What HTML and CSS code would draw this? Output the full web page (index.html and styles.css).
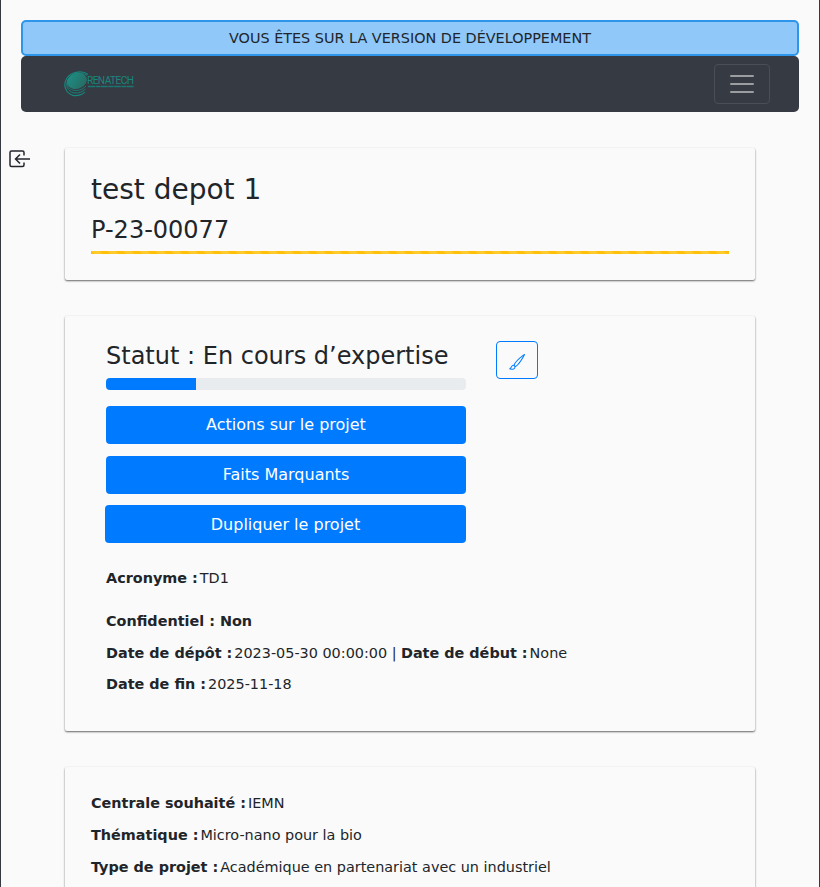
FILE: index.html
```html
<!DOCTYPE html>
<html lang="fr">
<head>
<meta charset="utf-8">
<title>test depot 1</title>
<link rel="stylesheet" href="styles.css">
</head>
<body>
<div class="page">
  <div class="banner">VOUS ÊTES SUR LA VERSION DE DÉVELOPPEMENT</div>
  <nav class="navbar">
    <a class="brand" href="#" aria-label="Renatech">
      <svg width="76" height="28" viewBox="0 0 76 28">
        <defs><linearGradient id="disc" x1="0" y1="0" x2="1" y2="1"><stop offset="0" stop-color="#1c9287"/><stop offset="1" stop-color="#29665f"/></linearGradient></defs>
        <g fill="none" stroke="#16877e">
          <path d="M25 4.500C20 .5 9 1 4 8C-.5 14.500 2.500 23.500 10 25.300C15 26.200 20 24.500 22 22" stroke-width="1.200"/>
          <path d="M24 5.500C19 2 10 2.500 5.500 8.500C1.500 15 4.500 21.500 11 22.900C16 23.600 20 21.500 22.500 19" stroke-width=".9"/>
          <path d="M5.500 9C2 16 7 20.500 13 20.500C18 20.500 21 18 23 16" stroke-width=".8"/>
        </g>
        <ellipse cx="14" cy="10.800" rx="10" ry="7.900" transform="rotate(-20 14 10.800)" fill="url(#disc)"/>
        <text class="logo-name" x="24" y="14">RENATECH</text>
        <path d="M25 16.500H71" stroke="#16877e" stroke-width="1.500" stroke-dasharray="7 .5 5 .4" opacity=".8"/>
      </svg>
    </a>
    <button class="toggler" aria-label="Menu">
      <svg width="30" height="30" viewBox="0 0 30 30"><path d="M4 7H26M4 15H26M4 23H26" stroke="#fff" stroke-opacity=".5" stroke-width="2" stroke-linecap="round"/></svg>
    </button>
  </nav>
  <a class="exit" href="#" aria-label="Retour">
    <svg width="22" height="18" viewBox="0 0 22 18" fill="none" stroke="#24262d" stroke-width="1.500"><path d="M15 5.500V2.500Q15 1 13.500 1H2.500Q1 1 1 2.500V15Q1 16.500 2.500 16.500H13.500Q15 16.500 15 15V12.500M21 9H6.500M11 4.500L6.500 9L11 13.500"/></svg>
  </a>
  <main class="content">
    <section class="card title-card">
      <h2>test depot 1</h2>
      <h4>P-23-00077</h4>
      <div class="stripe"></div>
    </section>
    <section class="card status-card">
      <div class="status-row">
        <div class="status-main">
          <h4>Statut : En cours d’expertise</h4>
          <div class="progress"><div class="progress-bar"></div></div>
          <button class="btn">Actions sur le projet</button>
          <button class="btn">Faits Marquants</button>
          <button class="btn wide">Dupliquer le projet</button>
        </div>
        <button class="edit" aria-label="Modifier">
          <svg width="16" height="16" viewBox="0 0 16 16" fill="#007bff"><path d="M15.825.120a.5.500 0 0 1 .132.584c-1.530 3.430-4.743 8.170-7.095 10.640a6.067 6.067 0 0 1-2.373 1.534c-.018.227-.060.538-.160.868-.201.659-.667 1.479-1.708 1.740a8.118 8.118 0 0 1-3.078.132 3.659 3.659 0 0 1-.562-.135 1.382 1.382 0 0 1-.466-.247.714.714 0 0 1-.204-.288.622.622 0 0 1 .004-.443c.095-.245.316-.380.461-.452.394-.197.625-.453.867-.826.095-.144.184-.297.287-.472l.117-.198c.151-.255.326-.540.546-.848.528-.739 1.201-.925 1.746-.896.126.007.243.025.348.048.062-.172.142-.380.238-.608.261-.619.658-1.419 1.187-2.069 2.176-2.670 6.180-6.206 9.117-8.104a.5.500 0 0 1 .596.040zM4.705 11.912a1.230 1.230 0 0 0-.419-.100c-.246-.013-.573.050-.879.479-.197.275-.355.532-.500.777l-.105.177c-.106.181-.213.362-.320.528a3.390 3.390 0 0 1-.760.861c.690.112 1.736.111 2.657-.120.559-.139.843-.569.993-1.060a3.122 3.122 0 0 0 .126-.750l-.793-.792zm1.440.026c.120-.040.277-.100.458-.183a5.068 5.068 0 0 0 1.535-1.100c1.900-1.996 4.412-5.570 6.052-8.631-2.590 1.927-5.566 4.660-7.302 6.792-.442.543-.795 1.243-1.042 1.826-.121.288-.214.540-.275.720v.001l.575.575z"/></svg>
        </button>
      </div>
      <p class="acronym"><b>Acronyme :</b> TD1</p>
      <p><b>Confidentiel : Non</b></p>
      <p><b>Date de dépôt :</b> 2023-05-30 00:00:00 <span class="bar">|</span><b>Date de début :</b> None</p>
      <p><b>Date de fin :</b> 2025-11-18</p>
    </section>
    <section class="card detail-card">
      <p><b>Centrale souhaité :</b> IEMN</p>
      <p><b>Thématique :</b> Micro-nano pour la bio</p>
      <p><b>Type de projet :</b> Académique en partenariat avec un industriel</p>
    </section>
  </main>
</div>
</body>
</html>
```
FILE: styles.css
```css
* { box-sizing: border-box; }
body {
  margin: 0;
  background: #fafafa;
  color: #212529;
  font: 14.4px/21.6px "DejaVu Sans", sans-serif;
}
.page {
  position: relative;
  height: 887px;
  overflow: hidden;
  padding: 20px 20px 0;
  border: solid #343a40;
  border-width: 0 1px;
}
.banner {
  height: 36px;
  border: 2px solid #2e96ea;
  border-radius: 5px;
  background: #8fc8f9;
  text-align: center;
  line-height: 33px;
}
.navbar {
  display: flex;
  align-items: center;
  justify-content: space-between;
  height: 56px;
  padding: 0 29px 0 42px;
  border-radius: 5px;
  background: #363a42;
}
.brand { display: flex; }
.logo-name { font: 10.200px Roboto, sans-serif; letter-spacing: -.6px; fill: #16877e; }
.toggler {
  display: flex;
  align-items: center;
  justify-content: center;
  width: 56px;
  height: 40px;
  padding: 0;
  border: 1px solid #4a4e55;
  border-radius: 4px;
  background: none;
}
.exit { position: absolute; left: 8px; top: 150px; line-height: 0; }
.content { padding: 36px 44px 0; }
.card {
  margin-bottom: 36px;
  border-radius: 2px;
  box-shadow: 0 1px 2px rgba(0, 0, 0, .6);
}
h2, h4, p { margin: 0; font-weight: 400; }
h2 { font-size: 28px; line-height: 35px; }
h4 { font-size: 24px; line-height: 29px; }
.title-card { height: 132px; padding: 24px 26px; }
.title-card h4 { margin-top: 9px; }
.stripe {
  height: 3px;
  margin-top: 6px;
  background: linear-gradient(45deg, rgba(255,255,255,.15) 25%, transparent 25%, transparent 50%, rgba(255,255,255,.15) 50%, rgba(255,255,255,.15) 75%, transparent 75%) 0 0 / 16px 16px #ffc107;
}
.status-card { height: 415px; padding: 25px 41px; }
.status-row { display: flex; gap: 30px; align-items: flex-start; }
.status-main { width: 360px; padding-top: 1px; }
.progress {
  height: 12px;
  margin: 7px 0 16px;
  border-radius: 4px;
  overflow: hidden;
  background: #e9ecef;
}
.progress-bar { width: 25%; height: 100%; background: #007bff; }
.btn {
  display: block;
  width: 100%;
  height: 38px;
  margin: 0 0 12px;
  padding: 0;
  border: 0;
  border-radius: 4px;
  background: #007bff;
  color: #fff;
  font: 16px/38px "DejaVu Sans", sans-serif;
}
.btn.wide { width: 361px; margin: -1px 0 0 -1px; padding-top: 2px; line-height: 36px; }
.edit {
  display: flex;
  align-items: center;
  justify-content: center;
  width: 42px;
  height: 38px;
  padding: 4px 0 0;
  border: 1px solid #007bff;
  border-radius: 4px;
  background: none;
}
.card p { margin-bottom: 10.100px; }
.card p b { margin-right: -2.600px; }
.card p .bar { margin-right: 4.400px; }
.card .acronym { margin: 25.200px 0 21.100px; }
.detail-card { height: 200px; padding: 26px 26px; }
.detail-card p { margin-bottom: 10.400px; }
```
